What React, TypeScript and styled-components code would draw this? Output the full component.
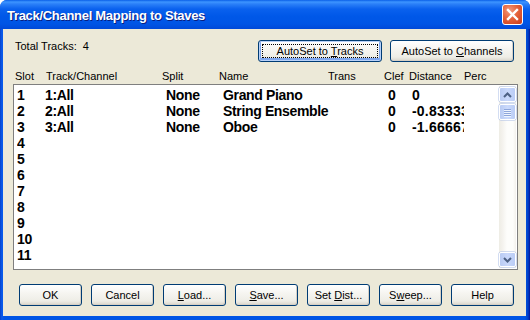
import styled, { createGlobalStyle } from 'styled-components';

const GlobalStyle = createGlobalStyle`
  html, body {
    margin: 0;
    padding: 0;
    background: #ffffff;
  }
  * {
    box-sizing: border-box;
  }
`;

interface Track {
  slot: number;
  channel?: string;
  split?: string;
  name?: string;
  clef?: string;
  distance?: string;
}

const tracks: Track[] = [
  { slot: 1, channel: '1:All', split: 'None', name: 'Grand Piano', clef: '0', distance: '0' },
  { slot: 2, channel: '2:All', split: 'None', name: 'String Ensemble', clef: '0', distance: '-0.833333' },
  { slot: 3, channel: '3:All', split: 'None', name: 'Oboe', clef: '0', distance: '-1.66667' },
  { slot: 4 },
  { slot: 5 },
  { slot: 6 },
  { slot: 7 },
  { slot: 8 },
  { slot: 9 },
  { slot: 10 },
  { slot: 11 },
];

const headers = ['Slot', 'Track/Channel', 'Split', 'Name', 'Trans', 'Clef', 'Distance', 'Perc'];

export default function App() {
  return (
    <>
      <GlobalStyle />
      <Window>
        <TitleBar>
          <Title>Track/Channel Mapping to Staves</Title>
          <CloseButton>
            <svg width="13" height="13" viewBox="0 0 13 13">
              <path d="M2 2 L11 11 M11 2 L2 11" stroke="#fff" strokeWidth="2.4" strokeLinecap="square" />
            </svg>
          </CloseButton>
        </TitleBar>
        <Client>
          <TopRow>
            <TotalLabel>Total Tracks:&nbsp;&nbsp;4</TotalLabel>
            <TopButtons>
              <Button width={124} focused><span>AutoSet to <u>T</u>racks</span></Button>
              <Button width={124}><span>AutoSet to <u>C</u>hannels</span></Button>
            </TopButtons>
          </TopRow>
          <HeaderRow>
            {headers.map((h) => (
              <HeaderCell key={h}>{h}</HeaderCell>
            ))}
          </HeaderRow>
          <ListBox>
            <Rows>
              {tracks.map((t) => (
                <Row key={t.slot}>
                  <Cell>{t.slot}</Cell>
                  <Cell>{t.channel}</Cell>
                  <Cell>{t.split}</Cell>
                  <Cell>{t.name}</Cell>
                  <Cell>{t.clef}</Cell>
                  <NumberCell>{t.distance}</NumberCell>
                  <Cell />
                </Row>
              ))}
            </Rows>
            <ScrollBar>
              <ScrollButton>
                <svg width="9" height="6" viewBox="0 0 9 6">
                  <path d="M1 5 L4.5 1.5 L8 5" stroke="#4D6185" strokeWidth="2" fill="none" />
                </svg>
              </ScrollButton>
              <Thumb>
                <Grip />
                <Grip />
                <Grip />
                <Grip />
              </Thumb>
              <Track />
              <ScrollButton>
                <svg width="9" height="6" viewBox="0 0 9 6">
                  <path d="M1 1 L4.5 4.5 L8 1" stroke="#4D6185" strokeWidth="2" fill="none" />
                </svg>
              </ScrollButton>
            </ScrollBar>
          </ListBox>
          <BottomRow>
            <Button width={63}><span>OK</span></Button>
            <Button width={63}><span>Cancel</span></Button>
            <Button width={63}><span><u>L</u>oad...</span></Button>
            <Button width={63}><span><u>S</u>ave...</span></Button>
            <Button width={63}><span>Set <u>D</u>ist...</span></Button>
            <Button width={63}><span>S<u>w</u>eep...</span></Button>
            <Button width={63}><span>Help</span></Button>
          </BottomRow>
        </Client>
      </Window>
    </>
  );
}

const Window = styled.div`
  width: 530px;
  height: 320px;
  display: flex;
  flex-direction: column;
  background: linear-gradient(90deg, #0842C8 0px, #0A5CEE 2px, #0055E5 4px, #0055E5 525px, #0040C8 528px, #00139A 530px);
  border-radius: 7px 7px 0 0;
  overflow: hidden;
  font-family: 'Liberation Sans', Arial, sans-serif;
  font-size: 11px;
  color: #000;
`;

const TitleBar = styled.div`
  height: 29px;
  flex: 0 0 29px;
  display: flex;
  align-items: center;
  justify-content: space-between;
  padding: 0 7px 0 7px;
  background: linear-gradient(180deg, #0A5FE8 0px, #3D95FF 2px, #2B80F8 4px, #0A61EE 9px, #0058E8 16px, #0055E5 24px, #0049D8 29px);
`;

const Title = styled.div`
  color: #ffffff;
  font-weight: bold;
  font-size: 13px;
  letter-spacing: -0.3px;
  text-shadow: 1px 1px 0 #0A1E80;
  padding-top: 1px;
`;

const CloseButton = styled.div`
  width: 21px;
  height: 21px;
  border: 1px solid #ffffff;
  border-radius: 3px;
  background: radial-gradient(circle at 35% 30%, #F39A7E 0%, #E5633B 45%, #C7391A 100%);
  display: flex;
  align-items: center;
  justify-content: center;
`;

const Client = styled.div`
  flex: 1;
  margin: 0 4px 4px 3px;
  background: #ECE9D8;
  padding: 11px 8px 0 10px;
  display: flex;
  flex-direction: column;
`;

const TopRow = styled.div`
  display: flex;
  justify-content: space-between;
  align-items: flex-start;
  height: 22px;
`;

const TotalLabel = styled.div`
  padding-left: 2px;
  line-height: 13px;
`;

const TopButtons = styled.div`
  display: flex;
  gap: 8px;
  margin-right: 4px;
`;

const Button = styled.div<{ width: number; focused?: boolean }>`
  width: ${(p) => p.width}px;
  height: 22px;
  border: 1px solid #003C74;
  border-radius: 3px;
  background: linear-gradient(180deg, #FFFFFF 0%, #F6F5F1 40%, #EEEDE6 80%, #D9D5CB 100%);
  box-shadow: ${(p) => (p.focused ? 'inset 0 0 0 1px #B8D1F8, inset 0 -1px 0 2px #7EA6EE' : 'inset -1px -1px 0 #D6D0C5')};
  display: flex;
  align-items: center;
  justify-content: center;
  position: relative;
  font-size: 11px;
  line-height: 13px;
  color: #000;
  white-space: nowrap;

  &::after {
    content: '';
    display: ${(p) => (p.focused ? 'block' : 'none')};
    position: absolute;
    inset: 3px;
    border: 1px dotted #000;
  }

  u {
    text-decoration: underline;
    text-underline-offset: 1px;
  }
`;

const HeaderRow = styled.div`
  display: grid;
  grid-template-columns: 31px 116px 57px 109px 56px 25px 55px 1fr;
  padding-left: 2px;
  height: 22px;
  align-items: end;
  padding-bottom: 1px;
`;

const HeaderCell = styled.div`
  white-space: nowrap;
  line-height: 13px;
`;

const ListBox = styled.div`
  height: 186px;
  border: 1px solid #7F7F7F;
  background: #ffffff;
  display: flex;
`;

const Rows = styled.div`
  flex: 1;
  padding: 2px 0 0 3px;
  overflow: hidden;
`;

const Row = styled.div`
  display: grid;
  grid-template-columns: 28px 121px 57px 165px 24px 52px 1fr;
  height: 16px;
  align-items: center;
  font-size: 14px;
  font-weight: bold;
  letter-spacing: -0.35px;
`;

const Cell = styled.div`
  white-space: nowrap;
  overflow: hidden;
  line-height: 16px;
`;

const NumberCell = styled(Cell)`
  letter-spacing: 0.2px;
`;

const ScrollBar = styled.div`
  width: 17px;
  margin: 1px 1px 1px 0;
  display: flex;
  flex-direction: column;
  background: linear-gradient(90deg, #EEEDE5 0px, #F3F1EC 3px, #FDFDFB 8px, #FDFDFB 14px, #F3F1EC 17px);
`;

const ScrollButton = styled.div`
  width: 17px;
  height: 15px;
  margin: 1px 0;
  border: 1px solid #FFFFFF;
  border-radius: 2px;
  background: linear-gradient(90deg, #B9CBF3 0%, #C9D8FB 50%, #BACCF5 100%);
  box-shadow: 0 0 0 0.5px #A8BCE6;
  display: flex;
  align-items: center;
  justify-content: center;
`;

const Thumb = styled.div`
  width: 17px;
  height: 16px;
  margin-top: 1px;
  border: 1px solid #FFFFFF;
  border-radius: 2px;
  background: linear-gradient(90deg, #B9CBF3 0%, #CBDAFC 50%, #BACCF5 100%);
  box-shadow: 0 0 0 0.5px #A8BCE6;
  display: flex;
  flex-direction: column;
  align-items: center;
  justify-content: center;
  gap: 1px;
`;

const Grip = styled.div`
  width: 7px;
  height: 1px;
  background: #8EA6DB;
  box-shadow: 0 1px 0 #EEF4FE;
`;

const Track = styled.div`
  flex: 1;
`;

const BottomRow = styled.div`
  display: flex;
  gap: 9px;
  margin: 14px 0 0 6px;
`;
